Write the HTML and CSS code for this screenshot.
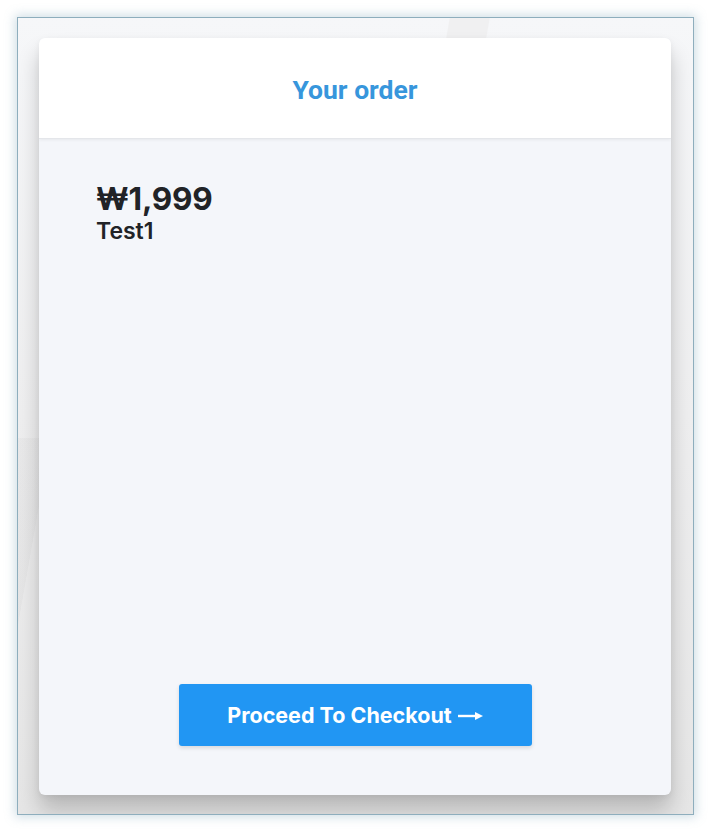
FILE: index.html
```html
<!DOCTYPE html>
<html lang="ko">
<head>
<meta charset="utf-8">
<title>Your order</title>
<link rel="stylesheet" href="styles.css">
</head>
<body>
<div class="frame">
  <div class="shape shape-a"></div>
  <div class="shape shape-b"></div>
  <div class="card">
    <header class="card-head">
      <h1 class="title">Your order</h1>
    </header>
    <main class="card-body">
      <div class="item">
        <div class="price">₩1,999</div>
        <div class="name">Test1</div>
      </div>
      <div class="actions">
        <button class="checkout">Proceed To Checkout
          <svg class="arrow" width="25" height="10" viewBox="0 0 25 10" aria-hidden="true"><path d="M0 5h18" stroke="#fff" stroke-width="2.4"/><path d="M17 1l8 4-8 4z" fill="#fff"/></svg>
        </button>
      </div>
    </main>
  </div>
</div>
</body>
</html>
```
FILE: styles.css
```css
html, body {
  margin: 0;
  padding: 0;
  background: #ffffff;
}
body {
  width: 711px;
  height: 832px;
  overflow: hidden;
  font-family: Inter, "Noto Sans", sans-serif;
}
.frame {
  position: relative;
  box-sizing: border-box;
  margin: 17px 0 0 17px;
  width: 677px;
  height: 798px;
  border: 1.5px solid #8eaebd;
  background: linear-gradient(180deg, #f6f7f9 0%, #efeff0 50%, #e6e6e6 100%);
  box-shadow: 0 0 10px 2px rgba(120, 160, 180, 0.35);
  padding: 20px 22px 19px 21px;
  overflow: hidden;
}
.shape {
  position: absolute;
  pointer-events: none;
}
.shape-a {
  left: 430px;
  top: -10px;
  width: 40px;
  height: 40px;
  background: #f0f0f1;
  transform: skewX(-10deg);
}
.shape-b {
  left: 0;
  top: 420px;
  width: 30px;
  height: 200px;
  background: linear-gradient(100deg, rgba(0,0,0,0.025) 50%, rgba(0,0,0,0) 51%);
}
.card {
  position: relative;
  height: 100%;
  display: flex;
  flex-direction: column;
  border-radius: 6px;
  overflow: hidden;
  background: #f4f6fa;
  box-shadow: 0 16px 22px rgba(0, 0, 0, 0.2), 0 2px 6px rgba(0, 0, 0, 0.06);
}
.card-head {
  height: 100px;
  background: #ffffff;
  display: flex;
  align-items: center;
  justify-content: center;
  border-bottom: 1px solid #e4e6ea;
  box-shadow: 0 1px 3px rgba(0, 0, 0, 0.06);
  position: relative;
  z-index: 1;
}
.title {
  margin: 0;
  font-family: Roboto, "Noto Sans", sans-serif;
  font-weight: 700;
  font-size: 26.5px;
  color: #3796dc;
  padding-top: 2px;
}
.card-body {
  flex: 1;
  display: flex;
  flex-direction: column;
  justify-content: space-between;
  padding: 42px 57px 49px 57px;
}
.price {
  font-size: 31.5px;
  font-weight: 700;
  color: #212327;
  line-height: 36px;
  letter-spacing: -0.2px;
}
.name {
  font-size: 23px;
  font-weight: 600;
  color: #212327;
  line-height: 26px;
  margin-top: 1px;
}
.actions {
  display: flex;
  justify-content: center;
}
.checkout {
  width: 353px;
  height: 62px;
  border: none;
  border-radius: 3px;
  background: #2196f3;
  color: #ffffff;
  font-family: Inter, "Noto Sans", sans-serif;
  font-weight: 700;
  font-size: 21.5px;
  display: flex;
  align-items: center;
  justify-content: center;
  gap: 6px;
  box-shadow: 0 2px 4px rgba(0, 0, 0, 0.12);
  padding: 0;
}
.arrow {
  display: block;
  margin-top: 1px;
}
```
